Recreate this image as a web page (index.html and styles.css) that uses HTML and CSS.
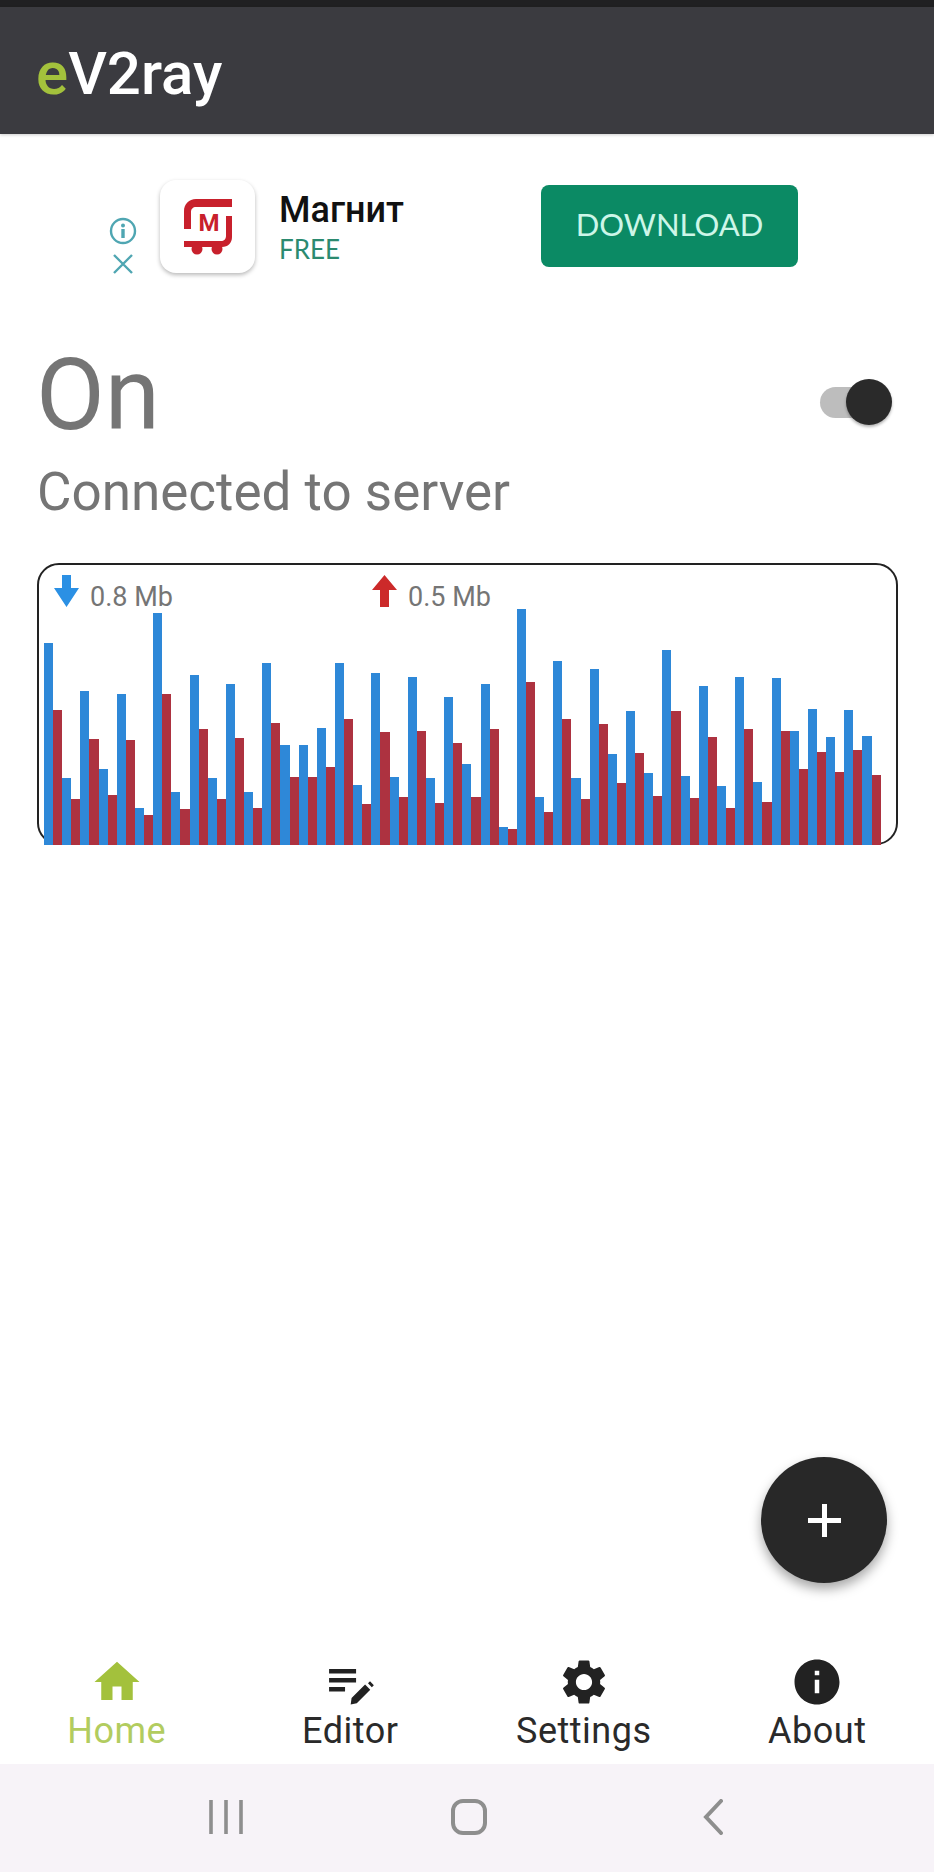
FILE: index.html
```html
<!DOCTYPE html>
<html lang="en">
<head>
<meta charset="utf-8">
<title>eV2ray</title>
<link rel="stylesheet" href="styles.css">
</head>
<body>
<div class="app">
  <div class="status-strip"></div>
  <header class="appbar"><span class="brand"><span class="brand-e">e</span>V2ray</span></header>

  <section class="ad">
    <div class="ad-flags">
      <svg class="ad-info" viewBox="0 0 28 28"><circle cx="14" cy="14" r="12" fill="none" stroke="#4fa6b2" stroke-width="2.4"/><rect x="12.3" y="12" width="3.4" height="9" fill="#4fa6b2"/><circle cx="14" cy="8.6" r="2" fill="#4fa6b2"/></svg>
      <svg class="ad-close" viewBox="0 0 22 22"><path d="M2 2l18 18M20 2L2 20" fill="none" stroke="#4fa6b2" stroke-width="2.4"/></svg>
    </div>
    <div class="ad-icon">
      <svg class="ad-logo" viewBox="0 0 48 56">
        <path d="M48 0H12C5 0 0 5 0 12v18h7V13c0-3 2-5 5-5h36z" fill="#c8202c"/>
        <path d="M48 17h-6v20c0 3-2 5-5 5H0v6h38c6 0 10-4 10-10z" fill="#c8202c"/>
        <circle cx="13" cy="50" r="5.5" fill="#c8202c"/>
        <circle cx="33" cy="50" r="5.500" fill="#c8202c"/>
        <text class="ad-logo-m" x="25" y="32" text-anchor="middle">М</text>
      </svg>
    </div>
    <div class="ad-copy">
      <div class="ad-name">Магнит</div>
      <div class="ad-price">FREE</div>
    </div>
    <div class="ad-button">DOWNLOAD</div>
  </section>

  <main class="content">
    <div class="power-row">
      <div class="power-label">On</div>
      <div class="switch"><span class="switch-track"></span><span class="switch-thumb"></span></div>
    </div>
    <div class="power-status">Connected to server</div>

    <div class="traffic">
      <div class="traffic-head">
        <div class="stat">
          <svg class="stat-arrow" viewBox="0 0 25 32"><path class="arrow-down" d="M8 0h9v13h8L12.500 32 0 13h8z"/></svg>
          <span class="stat-value">0.8 Mb</span>
        </div>
        <div class="stat">
          <svg class="stat-arrow" viewBox="0 0 25 32"><path class="arrow-up" d="M8 32h9V15h8L12.500 0 0 15h8z"/></svg>
          <span class="stat-value">0.5 Mb</span>
        </div>
      </div>
      <div class="bars">
        <i class="bar down" style="height:202.3px"></i><i class="bar up" style="height:135px"></i>
        <i class="bar down" style="height:66.7px"></i><i class="bar up" style="height:46px"></i>
        <i class="bar down" style="height:154px"></i><i class="bar up" style="height:105.7px"></i>
        <i class="bar down" style="height:76.3px"></i><i class="bar up" style="height:50px"></i>
        <i class="bar down" style="height:150.7px"></i><i class="bar up" style="height:104.7px"></i>
        <i class="bar down" style="height:36.7px"></i><i class="bar up" style="height:30px"></i>
        <i class="bar down" style="height:232px"></i><i class="bar up" style="height:150.7px"></i>
        <i class="bar down" style="height:52.7px"></i><i class="bar up" style="height:36.3px"></i>
        <i class="bar down" style="height:169.7px"></i><i class="bar up" style="height:116px"></i>
        <i class="bar down" style="height:67.3px"></i><i class="bar up" style="height:46px"></i>
        <i class="bar down" style="height:161px"></i><i class="bar up" style="height:107.3px"></i>
        <i class="bar down" style="height:52.7px"></i><i class="bar up" style="height:37.3px"></i>
        <i class="bar down" style="height:181.7px"></i><i class="bar up" style="height:122px"></i>
        <i class="bar down" style="height:99.7px"></i><i class="bar up" style="height:68.3px"></i>
        <i class="bar down" style="height:100.3px"></i><i class="bar up" style="height:68.3px"></i>
        <i class="bar down" style="height:116.7px"></i><i class="bar up" style="height:77.7px"></i>
        <i class="bar down" style="height:181.7px"></i><i class="bar up" style="height:125.7px"></i>
        <i class="bar down" style="height:59.7px"></i><i class="bar up" style="height:41.3px"></i>
        <i class="bar down" style="height:172.3px"></i><i class="bar up" style="height:112.7px"></i>
        <i class="bar down" style="height:68.3px"></i><i class="bar up" style="height:48.3px"></i>
        <i class="bar down" style="height:168px"></i><i class="bar up" style="height:114.3px"></i>
        <i class="bar down" style="height:66.7px"></i><i class="bar up" style="height:42.3px"></i>
        <i class="bar down" style="height:148px"></i><i class="bar up" style="height:102.3px"></i>
        <i class="bar down" style="height:80.7px"></i><i class="bar up" style="height:47.7px"></i>
        <i class="bar down" style="height:161px"></i><i class="bar up" style="height:116px"></i>
        <i class="bar down" style="height:18.3px"></i><i class="bar up" style="height:15.7px"></i>
        <i class="bar down" style="height:235.7px"></i><i class="bar up" style="height:162.7px"></i>
        <i class="bar down" style="height:47.7px"></i><i class="bar up" style="height:33.3px"></i>
        <i class="bar down" style="height:183.7px"></i><i class="bar up" style="height:125.7px"></i>
        <i class="bar down" style="height:66.7px"></i><i class="bar up" style="height:46px"></i>
        <i class="bar down" style="height:175.7px"></i><i class="bar up" style="height:121.3px"></i>
        <i class="bar down" style="height:90.7px"></i><i class="bar up" style="height:61.7px"></i>
        <i class="bar down" style="height:134px"></i><i class="bar up" style="height:91.7px"></i>
        <i class="bar down" style="height:71.7px"></i><i class="bar up" style="height:49.3px"></i>
        <i class="bar down" style="height:195px"></i><i class="bar up" style="height:134px"></i>
        <i class="bar down" style="height:69px"></i><i class="bar up" style="height:46.7px"></i>
        <i class="bar down" style="height:159.3px"></i><i class="bar up" style="height:108.3px"></i>
        <i class="bar down" style="height:59px"></i><i class="bar up" style="height:37.3px"></i>
        <i class="bar down" style="height:168px"></i><i class="bar up" style="height:116px"></i>
        <i class="bar down" style="height:63.3px"></i><i class="bar up" style="height:43.3px"></i>
        <i class="bar down" style="height:167px"></i><i class="bar up" style="height:114.3px"></i>
        <i class="bar down" style="height:114.3px"></i><i class="bar up" style="height:76.3px"></i>
        <i class="bar down" style="height:136px"></i><i class="bar up" style="height:92.7px"></i>
        <i class="bar down" style="height:108.3px"></i><i class="bar up" style="height:72.7px"></i>
        <i class="bar down" style="height:135px"></i><i class="bar up" style="height:95px"></i>
        <i class="bar down" style="height:109.3px"></i><i class="bar up" style="height:70px"></i>
      </div>
    </div>
  </main>

  <button class="fab"><svg class="fab-plus" viewBox="0 0 33 33"><path d="M14 0h5v14h14v5H19v14h-5V19H0v-5h14z"/></svg></button>

  <nav class="tabs">
    <a class="tab tab-active">
      <svg class="tab-icon" viewBox="0 0 24 24"><path d="M10 20v-6h4v6h5v-8h3L12 3 2 12h3v8z"/></svg>
      <span class="tab-label">Home</span>
    </a>
    <a class="tab">
      <svg class="tab-icon" viewBox="0 0 24 24"><path d="M2.700 6.200h12v2h-12zm0 4h12v2h-12zm0 4h7.100v2H2.700zM12.300 22l.4-2.900 6-6 2.300 2.300-6 6zM20 12.600l.9-.9 1.700 1.700-.9.900z"/></svg>
      <span class="tab-label">Editor</span>
    </a>
    <a class="tab">
      <svg class="tab-icon" viewBox="0 0 24 24"><path d="M19.140 12.940c.04-.3.06-.61.06-.94 0-.32-.02-.64-.07-.94l2.030-1.580c.18-.14.23-.41.12-.61l-1.920-3.320c-.12-.22-.37-.29-.59-.22l-2.390.96c-.5-.38-1.030-.7-1.620-.94l-.36-2.540c-.04-.24-.24-.41-.48-.41h-3.840c-.24 0-.43.17-.47.41l-.36 2.540c-.59.24-1.130.57-1.620.94l-2.390-.96c-.22-.08-.47 0-.59.22L2.740 8.870c-.12.21-.08.47.12.61l2.030 1.580c-.05.3-.09.63-.09.94s.02.64.07.94l-2.030 1.580c-.18.14-.23.41-.12.61l1.920 3.320c.12.22.37.29.59.22l2.390-.96c.5.38 1.030.7 1.620.94l.36 2.540c.05.24.24.41.48.41h3.840c.24 0 .44-.17.47-.41l.36-2.540c.59-.24 1.130-.56 1.620-.94l2.390.96c.22.08.47 0 .59-.22l1.920-3.320c.12-.22.07-.47-.12-.61l-2.010-1.580zM12 15.600c-1.980 0-3.600-1.620-3.600-3.600s1.620-3.600 3.600-3.600 3.600 1.620 3.600 3.600-1.620 3.600-3.600 3.600z"/></svg>
      <span class="tab-label">Settings</span>
    </a>
    <a class="tab">
      <svg class="tab-icon" viewBox="0 0 24 24"><path d="M12 2C6.480 2 2 6.480 2 12s4.480 10 10 10 10-4.480 10-10S17.520 2 12 2zm1 15h-2v-6h2v6zm0-8h-2V7h2v2z"/></svg>
      <span class="tab-label">About</span>
    </a>
  </nav>

  <div class="sysnav">
    <svg class="sys-recents" viewBox="0 0 34 36"><path d="M2 1v34M17 1v34M32 1v34"/></svg>
    <svg class="sys-home" viewBox="0 0 36 36"><rect x="2" y="2" width="32" height="32" rx="10"/></svg>
    <svg class="sys-back" viewBox="0 0 20 36"><path d="M18 2L3 18l15 16"/></svg>
  </div>
</div>
</body>
</html>
```

FILE: styles.css
```css
* { box-sizing: border-box; }
html, body { margin: 0; padding: 0; background: #fff; }
body { font-family: Roboto, "Liberation Sans", sans-serif; }

.app {
  position: relative;
  width: 934px;
  height: 1872px;
  display: flex;
  flex-direction: column;
  overflow: hidden;
}

.status-strip { height: 7px; background: #202022; }

.appbar {
  height: 127px;
  background: #3b3b40;
  padding: 6px 0 0 36px;
  display: flex;
  align-items: center;
  box-shadow: 0 1px 3px rgba(0, 0, 0, .2);
}
.brand { font-size: 60px; font-weight: 500; color: #fff; line-height: 1; }
.brand-e { color: #a3c13c; }

.ad {
  display: flex;
  align-items: center;
  padding: 46px 0 0 110px;
}
.ad-flags {
  width: 26px;
  align-self: flex-end;
  display: flex;
  flex-direction: column;
  align-items: center;
  gap: 8px;
  margin-right: 24px;
  margin-bottom: -2px;
}
.ad-info { width: 28px; height: 28px; flex: none; }
.ad-close { width: 22px; height: 22px; flex: none; }
.ad-icon {
  width: 95px;
  height: 93px;
  border-radius: 16px;
  background: #fff;
  box-shadow: 0 2px 4px rgba(0, 0, 0, .28);
  display: flex;
  align-items: center;
  justify-content: center;
}
.ad-logo { width: 48px; height: 56px; }
.ad-logo-m { font: 700 24px Roboto, sans-serif; fill: #c8202c; }
.ad-copy { width: 286px; padding: 3px 0 0 24px; display: flex; flex-direction: column; }
.ad-name { font-size: 36px; font-weight: 500; line-height: 42px; color: #111; }
.ad-price { font-family: Lato, sans-serif; font-size: 26px; line-height: 37px; color: #2b8a70; }
.ad-button {
  width: 257px;
  height: 82px;
  margin-bottom: 2px;
  padding-bottom: 4px;
  border-radius: 8px;
  background: #0b8a64;
  color: #cdf6e8;
  font-family: Lato, sans-serif;
  font-size: 31px;
  display: flex;
  align-items: center;
  justify-content: center;
}

.content { padding: 0 36px 0 37px; }
.power-row {
  display: flex;
  justify-content: space-between;
  align-items: center;
  margin-top: 55px;
  height: 134px;
}
.power-label { font-size: 100px; line-height: 110px; color: #757575; margin-left: -1px; }
.switch { position: relative; width: 72px; height: 46px; margin: 14px 6px 0 0; }
.switch-track {
  position: absolute;
  left: 0;
  top: 8px;
  width: 60px;
  height: 31px;
  border-radius: 16px;
  background: #bdbdbd;
}
.switch-thumb {
  position: absolute;
  right: 0;
  top: 0;
  width: 46px;
  height: 46px;
  border-radius: 50%;
  background: #2a2a2a;
  box-shadow: 0 2px 3px rgba(0, 0, 0, .3);
}
.power-status { font-size: 53px; line-height: 60px; color: #757575; }

.traffic {
  height: 282px;
  margin-top: 41px;
  border: 2px solid #222;
  border-radius: 22px;
  display: flex;
  flex-direction: column;
  padding: 10px 0 0 15px;
}
.traffic-head { display: flex; height: 34px; flex: none; }
.stat { width: 318px; display: flex; align-items: flex-start; gap: 11px; }
.stat-arrow { width: 25px; height: 32px; flex: none; }
.arrow-down { fill: #2b90e4; }
.arrow-up { fill: #cc2a2a; }
.stat-value { font-size: 27px; line-height: 34px; color: #757575; margin-top: 5px; }

.bars {
  flex: 1;
  display: flex;
  align-items: flex-end;
  width: 836px;
  margin-left: -10px;
  margin-bottom: -2px;
}
.bar { display: block; flex: 1 1 0; }
.bar.down { background: #2e88d8; }
.bar.up { background: #ad3240; }

.fab {
  position: absolute;
  left: 761px;
  top: 1457px;
  width: 126px;
  height: 126px;
  padding: 0;
  border: 0;
  border-radius: 50%;
  background: #282828;
  box-shadow: 0 6px 12px rgba(0, 0, 0, .35);
  display: flex;
  align-items: center;
  justify-content: center;
}
.fab-plus { width: 33px; height: 33px; fill: #fff; }

.tabs {
  margin-top: auto;
  height: 109px;
  display: grid;
  grid-template-columns: repeat(4, 1fr);
}
.tab { display: flex; flex-direction: column; align-items: center; color: #2a2a2a; }
.tab-icon { width: 54px; height: 54px; fill: #222; flex: none; }
.tab-label { font-size: 36px; letter-spacing: .5px; line-height: 40px; margin-top: 2px; }
.tab-active { color: #b2cc5f; }
.tab-active .tab-icon { fill: #a3c13c; }

.sysnav {
  height: 108px;
  background: #f7f3f8;
  display: flex;
  align-items: center;
  padding: 0 0 2px 209px;
}
.sysnav svg { fill: none; stroke: #8e8e8e; flex: none; }
.sys-recents { width: 34px; height: 36px; stroke-width: 3.6; }
.sys-home { width: 36px; height: 36px; stroke-width: 4; margin-left: 208px; }
.sys-back { width: 20px; height: 36px; stroke-width: 4; stroke-linecap: round; margin-left: 216px; }
```
